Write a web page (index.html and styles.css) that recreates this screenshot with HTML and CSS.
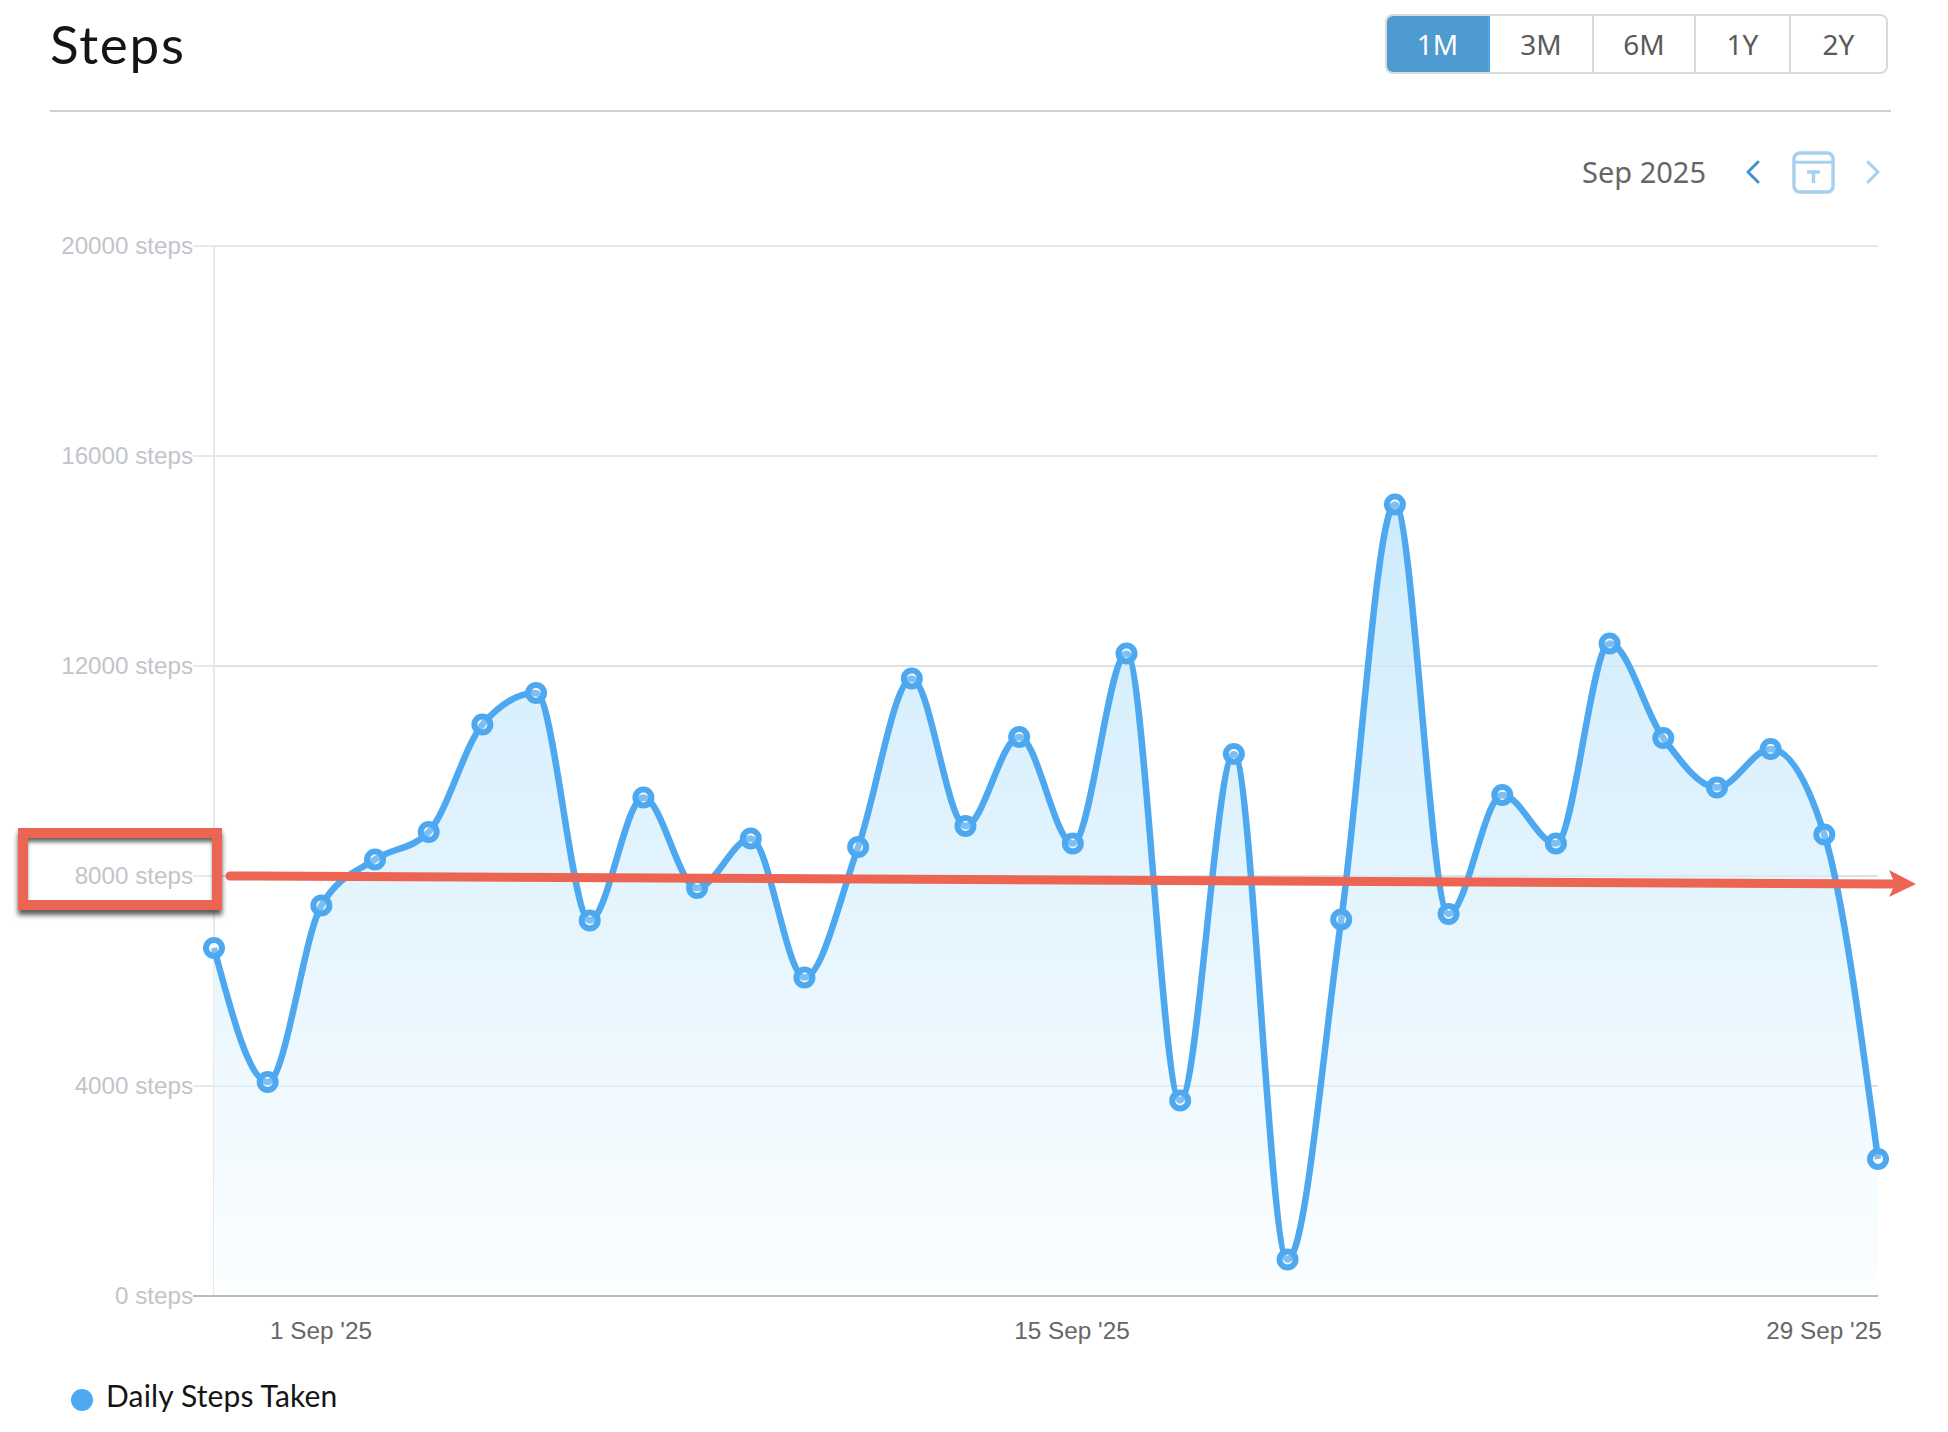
FILE: index.html
```html
<!DOCTYPE html>
<html lang="en">
<head>
<meta charset="utf-8">
<title>Steps</title>
<link rel="stylesheet" href="styles.css">
</head>
<body>
<header class="header">
  <h1 class="title">Steps</h1>
  <div class="tabs">
    <button class="tab tab-1m is-active">1M</button>
    <button class="tab tab-3m">3M</button>
    <button class="tab tab-6m">6M</button>
    <button class="tab tab-1y">1Y</button>
    <button class="tab tab-2y">2Y</button>
  </div>
</header>
<div class="toolbar">
  <span class="period">Sep 2025</span>
  <svg class="nav-icon nav-prev" viewBox="0 0 16 26" width="16" height="26"><path d="M13 3 L3 13 L13 23" fill="none" stroke="#3f93d0" stroke-width="3" stroke-linecap="round" stroke-linejoin="round"/></svg>
  <svg class="cal-icon" viewBox="0 0 44 44" width="43" height="43">
    <rect x="2" y="2" width="40" height="40" rx="6" fill="none" stroke="#a5d0ee" stroke-width="3.5"/>
    <path d="M2 11.5 H42" stroke="#a5d0ee" stroke-width="3"/>
    <path d="M15.5 21.5 H28.5 M22 21.5 V33" fill="none" stroke="#a5d0ee" stroke-width="3.5"/>
  </svg>
  <svg class="nav-icon nav-next" viewBox="0 0 16 26" width="16" height="26"><path d="M3 3 L13 13 L3 23" fill="none" stroke="#a5d0ee" stroke-width="3" stroke-linecap="round" stroke-linejoin="round"/></svg>
</div>
<main class="chart">
  <svg class="plot" id="plot" viewBox="0 220 1948 1140" width="1948" height="1140">
    <defs>
      <linearGradient id="area" gradientUnits="userSpaceOnUse" x1="0" y1="504" x2="0" y2="1296">
        <stop offset="0" stop-color="#cdebfc"/>
        <stop offset="1" stop-color="#fcfeff"/>
      </linearGradient>
    </defs>
    <g class="grid">
      <path d="M193 246 H1878"/>
      <path d="M193 456 H1878"/>
      <path d="M193 666 H1878"/>
      <path d="M193 876 H1878"/>
      <path d="M193 1086 H1878"/>
      <path d="M214 246 V1296"/>
    </g>
    <path class="area" id="area-path"/>
    <g class="grid grid-over">
      <path d="M214 666 H1878"/>
      <path d="M214 876 H1878"/>
      <path d="M214 1086 H1878"/>
    </g>
    <path class="baseline" d="M193 1296 H1878"/>
    <g class="y-labels">
      <text x="193" y="254">20000 steps</text>
      <text x="193" y="464">16000 steps</text>
      <text x="193" y="674">12000 steps</text>
      <text x="193" y="884">8000 steps</text>
      <text x="193" y="1094">4000 steps</text>
      <text x="193" y="1304">0 steps</text>
    </g>
    <g class="x-labels">
      <text x="321" y="1339">1 Sep '25</text>
      <text x="1072" y="1339">15 Sep '25</text>
      <text x="1824" y="1339">29 Sep '25</text>
    </g>
    <path class="line" id="line-path"/>
    <g id="markers"></g>
    <path class="arrow-shaft" d="M230 876 L1895 884"/>
    <polygon class="arrow-head" points="1916,884 1889,870 1895,884 1889,897"/>
  </svg>
  <div class="callout"></div>
</main>
<footer class="legend">
  <span class="legend-dot"></span>
  <span class="legend-text">Daily Steps Taken</span>
</footer>
<script src="chart.js"></script>
</body>
</html>
```

FILE: styles.css
```css
* { box-sizing: border-box; }
html, body { margin: 0; padding: 0; background: #fff; }
body { width: 1948px; height: 1432px; overflow: hidden; font-family: "Lato", "Open Sans", sans-serif; }

.header {
  height: 112px;
  margin: 0 57px 0 50px;
  padding-top: 14px;
  border-bottom: 2px solid #cfcfcf;
  display: flex;
  justify-content: space-between;
  align-items: flex-start;
}
.title {
  margin: 0;
  font-family: "Lato", sans-serif;
  font-weight: 400;
  font-size: 53px;
  letter-spacing: 1.7px;
  line-height: 60px;
  color: #151515;
}
.tabs {
  display: flex;
  height: 60px;
  margin-right: 3px;
  border: 2px solid #d9d9d9;
  border-radius: 8px;
  overflow: hidden;
}
.tab {
  padding: 0;
  border: 0;
  border-right: 2px solid #d9d9d9;
  background: #fff;
  font-family: "Noto Sans", sans-serif;
  font-size: 28px;
  color: #5a5a5a;
}
.tab-2y { border-right: 0; }
.tab-1m { width: 103px; }
.tab-3m { width: 104px; }
.tab-6m { width: 102px; }
.tab-1y { width: 95px; }
.tab-2y { width: 95px; }
.tab.is-active { background: #4d9bd1; color: #fff; border-right: 2px solid #4ea8ee; }

.toolbar {
  height: 108px;
  padding: 39px 67px 0 0;
  display: flex;
  justify-content: flex-end;
  align-items: flex-start;
}
.period {
  font-family: "Noto Sans", sans-serif;
  font-size: 29px;
  line-height: 42px;
  color: #666;
  margin-right: 39px;
}
.nav-icon { margin-top: 8px; }
.cal-icon { margin: 0 30px 0 31px; }

.chart { position: relative; height: 1140px; }
.plot { display: block; }
.grid path { stroke: #e8e8e8; stroke-width: 2; fill: none; }
.grid-over path { stroke: rgba(200, 215, 225, 0.35); }
.area { fill: url(#area); }
.baseline { stroke: #bbb; stroke-width: 2; fill: none; }
.y-labels text {
  font-family: "Liberation Sans", sans-serif;
  font-size: 24.2px;
  fill: #c2c4ca;
  text-anchor: end;
}
.x-labels text {
  font-family: "Liberation Sans", sans-serif;
  font-size: 24.3px;
  fill: #666;
  text-anchor: middle;
}
.line { fill: none; stroke: #4da8f0; stroke-width: 6.5; stroke-linejoin: round; }
.marker { fill: rgba(255, 255, 255, 0.28); stroke: #4da8f0; stroke-width: 6; }
.arrow-shaft { stroke: #ec6553; stroke-width: 9; stroke-linecap: round; fill: none; }
.arrow-head { fill: #ec6553; }

.callout {
  position: absolute;
  left: 18px;
  top: 608px;
  width: 204px;
  height: 82px;
  border: 10px solid #ec6553;
  box-shadow: 0 5px 5px rgba(0, 0, 0, 0.65), inset 0 5px 4px -1px rgba(0, 0, 0, 0.6);
}

.legend {
  padding: 25px 0 0 71px;
  display: flex;
  align-items: flex-start;
}
.legend-dot {
  width: 22px;
  height: 22px;
  margin-top: 4px;
  border-radius: 50%;
  background: #4da8f0;
}
.legend-text {
  margin: -8px 0 0 13px;
  font-family: "Lato", sans-serif;
  font-size: 30px;
  letter-spacing: 0.15px;
  line-height: 36px;
  color: #151515;
}
```

FILE: chart.js
```js
// Daily step counts plotted as pixel rows of the chart canvas.
var ys = [948, 1082, 905.5, 859.5, 832, 724.5, 693, 920.5, 797.5, 888, 838.5, 977.5, 847, 678.5, 826,
  737, 843.5, 653.5, 1100.5, 754, 1259.5, 919.5, 504.5, 914, 795, 843.5, 643.5, 738, 787.5, 749, 834.5, 1159];
var x0 = 214, x1 = 1878, step = (x1 - x0) / (ys.length - 1);
var xs = ys.map(function (_, i) { return x0 + i * step; });

function sign(v) { return v < 0 ? -1 : 1; }
function tangents() {
  var t = [], n = ys.length;
  for (var i = 1; i < n - 1; i++) {
    var s0 = (ys[i] - ys[i - 1]) / step, s1 = (ys[i + 1] - ys[i]) / step, p = (s0 + s1) / 2;
    t[i] = (sign(s0) + sign(s1)) * Math.min(Math.abs(s0), Math.abs(s1), 0.5 * Math.abs(p)) || 0;
  }
  t[0] = (3 * (ys[1] - ys[0]) / step - t[1]) / 2;
  t[n - 1] = (3 * (ys[n - 1] - ys[n - 2]) / step - t[n - 2]) / 2;
  return t;
}
var t = tangents(), d = "M" + xs[0] + " " + ys[0], h = step / 3;
for (var i = 1; i < ys.length; i++) {
  d += " C" + (xs[i - 1] + h) + " " + (ys[i - 1] + h * t[i - 1]) + " " + (xs[i] - h) + " " + (ys[i] - h * t[i]) + " " + xs[i] + " " + ys[i];
}
document.getElementById("line-path").setAttribute("d", d);
document.getElementById("area-path").setAttribute("d", d + " L" + x1 + " 1296 L" + x0 + " 1296 Z");

var g = document.getElementById("markers");
ys.forEach(function (y, i) {
  var c = document.createElementNS("http://www.w3.org/2000/svg", "circle");
  c.setAttribute("class", "marker");
  c.setAttribute("cx", xs[i]);
  c.setAttribute("cy", y);
  c.setAttribute("r", 8);
  g.appendChild(c);
});
```
